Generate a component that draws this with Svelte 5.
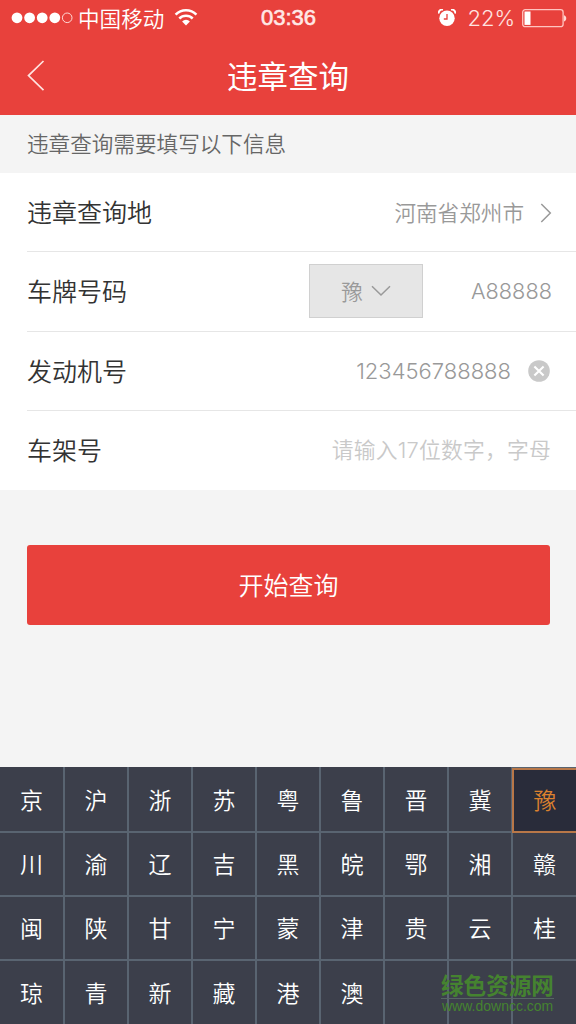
<script lang="ts">
	const provinces = [...'京沪浙苏粤鲁晋冀豫川渝辽吉黑皖鄂湘赣闽陕甘宁蒙津贵云桂琼青新藏港澳'];
	const keys = [...provinces, '', '', ''];

	let province = $state('豫');
	let city = $state('河南省郑州市');
	let plate = $state('A88888');
	let engine = $state('123456788888');
	let frame = $state('');

	function pick(key: string) {
		if (key) province = key;
	}
</script>

<div class="screen">
	<header>
		<div class="status">
			<div class="carrier">
				<svg width="62" height="12" viewBox="0 0 62 12">
					{#each [6, 18.6, 31.2, 43.8] as cx (cx)}
						<circle {cx} cy="5.8" r="5.4" fill="#fff" />
					{/each}
					<circle cx="56.2" cy="5.8" r="4.8" fill="none" stroke="#ffd9d5" />
				</svg>
				<span class="operator">中国移动</span>
				<svg class="wifi" width="24" height="18" viewBox="0 0 24 18">
					<g fill="none" stroke="#fff" stroke-width="2.5">
						<path d="M1.6 6.6a14.5 14.5 0 0 1 20.8 0" />
						<path d="M5.3 10.5a9.4 9.4 0 0 1 13.4 0" />
					</g>
					<path d="M12 17.4l-3.9-3.9a5.4 5.4 0 0 1 7.8 0z" fill="#fff" />
				</svg>
			</div>
			<span class="time">03:36</span>
			<div class="power">
				<svg width="18" height="18" viewBox="0 0 18 18">
					<circle cx="9" cy="9.3" r="7.7" fill="#fff" />
					<path d="M.9 4.5a3 3 0 0 1 4-3.6M17.1 4.5a3 3 0 0 0-4-3.6" fill="none" stroke="#fff" stroke-width="1.9" />
					<path d="M9 5v5H5.8" fill="none" stroke="#e8413c" stroke-width="1.3" />
				</svg>
				<span class="percent">22%</span>
				<svg width="45" height="19" viewBox="0 0 45 19">
					<rect x=".7" y=".7" width="40.4" height="17" rx="2.5" fill="none" stroke="#ffc4bf" stroke-width="1.3" />
					<rect x="2.5" y="2.5" width="6" height="13.4" fill="#fff" />
					<path d="M42 6.2c3 .6 3 5.6 0 6.2z" fill="#ffd9d5" />
				</svg>
			</div>
		</div>
		<div class="nav">
			<button class="back" type="button" aria-label="返回">
				<svg width="18" height="32" viewBox="0 0 18 32">
					<path d="M16.5 1L1.5 15.6l15 14.6" fill="none" stroke="#ffe3e0" stroke-width="1.7" />
				</svg>
			</button>
			<h1>违章查询</h1>
		</div>
	</header>

	<p class="tip">违章查询需要填写以下信息</p>

	<div class="form">
		<div class="row">
			<span class="label">违章查询地</span>
			<span class="value">{city}</span>
			<svg class="next" width="12" height="20" viewBox="0 0 12 20">
				<path d="M1.3 1l9 9-9 9" fill="none" stroke="#999" stroke-width="1.5" />
			</svg>
		</div>
		<div class="row">
			<span class="label">车牌号码</span>
			<button class="province" type="button">
				<span>{province}</span>
				<svg width="20" height="12" viewBox="0 0 20 12">
					<path d="M1 1.2l9 8.8 9-8.8" fill="none" stroke="#999" stroke-width="1.5" />
				</svg>
			</button>
			<span class="value plate">{plate}</span>
		</div>
		<div class="row">
			<span class="label">发动机号</span>
			<span class="value engine">{engine}</span>
			<button class="clear" type="button" aria-label="清除" onclick={() => (engine = '')}>
				<svg width="22" height="22" viewBox="0 0 22 22">
					<circle cx="11" cy="11" r="10.8" fill="#c9c9c9" />
					<path d="M6.4 6.4l9.2 9.2M15.6 6.4l-9.2 9.2" stroke="#fff" stroke-width="2.1" />
				</svg>
			</button>
		</div>
		<div class="row">
			<span class="label">车架号</span>
			<input bind:value={frame} placeholder="请输入17位数字，字母" />
		</div>
	</div>

	<button class="submit" type="button">开始查询</button>

	<div class="keypad">
		{#each keys as key, index (index)}
			<button class="key" class:active={key !== '' && key === province} type="button" onclick={() => pick(key)}>{key}</button>
		{/each}
	</div>

	<div class="watermark">
		<strong>绿色资源网</strong>
		<span>www.downcc.com</span>
	</div>
</div>

<style>
	:global(body) {
		margin: 0;
	}

	.screen {
		position: relative;
		display: flex;
		flex-direction: column;
		width: 576px;
		height: 1024px;
		overflow: hidden;
		background: #f4f4f4;
		font-family: 'Noto Sans CJK SC', sans-serif;
		font-weight: 350;
	}

	button,
	input {
		padding: 0;
		border: 0;
		background: none;
		font: inherit;
	}

	svg {
		display: block;
		flex: none;
	}

	header {
		height: 115px;
		background: #e8413c;
		color: #fff;
	}

	.status {
		display: grid;
		grid-template-columns: 1fr auto 1fr;
		align-items: center;
		height: 36px;
		padding: 0 9px 0 11px;
	}

	.carrier,
	.power {
		display: flex;
		align-items: center;
	}

	.operator {
		margin: 0 0 0 5px;
		font-size: 21.6px;
		line-height: 32px;
	}

	.wifi {
		margin: -3px 0 0 10px;
	}

	.time {
		margin-left: -1px;
		font: 22px/36px 'Liberation Sans', sans-serif;
		color: #ffe9e7;
		-webkit-text-stroke: 0.6px #ffe9e7;
	}

	.power {
		justify-content: flex-end;
	}

	.power svg:first-child {
		margin-top: -1px;
	}

	.percent {
		margin: 0 7px 0 11px;
		font: 300 22px/36px Inter, sans-serif;
		color: #ffe3e0;
	}

	.nav {
		position: relative;
		display: flex;
		align-items: center;
		justify-content: center;
		height: 77px;
	}

	.back {
		position: absolute;
		left: 27px;
		top: 24px;
	}

	h1 {
		margin: 0;
		font-size: 30.5px;
		line-height: 44px;
		font-weight: 400;
	}

	.tip {
		height: 58px;
		margin: 0;
		padding-left: 27px;
		font-size: 21.6px;
		line-height: 55px;
		color: #666;
	}

	.form {
		height: 317px;
		display: grid;
		grid-template-rows: repeat(4, 1fr);
		padding-left: 27px;
		background: #fff;
	}

	.row {
		display: flex;
		align-items: center;
		box-sizing: border-box;
		padding-right: 25px;
		border-bottom: 1px solid #e6e6e6;
	}

	.row:last-child {
		border-bottom: 0;
	}

	.label {
		flex: 1;
		padding-bottom: 2px;
		font-size: 25px;
		line-height: 36px;
		color: #333;
	}

	.value {
		font-size: 21.6px;
		line-height: 32px;
		color: #999;
	}

	.next {
		margin: 2px -1px 0 16px;
	}

	.province {
		display: flex;
		align-items: center;
		justify-content: center;
		gap: 8px;
		box-sizing: border-box;
		width: 114px;
		height: 54px;
		border: 1px solid #d0d0d0;
		background: #e6e6e6;
		font-size: 21.6px;
		color: #999;
	}

	.province span {
		padding-bottom: 2px;
	}

	.plate,
	.engine {
		font-family: Inter, sans-serif;
		font-size: 22px;
		font-weight: 350;
	}

	.plate {
		width: 80px;
		margin-left: 48px;
		font-size: 21.7px;
	}

	.clear {
		margin: 0 1px 0 17px;
	}

	input {
		width: 240px;
		font-family: Inter, 'Noto Sans CJK SC', sans-serif;
		font-size: 21.8px;
		line-height: 32px;
		letter-spacing: 0.2px;
		text-align: right;
		color: #999;
		outline: 0;
	}

	input::placeholder {
		color: #c9c9c9;
		opacity: 1;
	}

	.submit {
		height: 80px;
		margin: 55px 26px 0 27px;
		padding-bottom: 2px;
		border-radius: 3px;
		background: #e8413c;
		color: #fff;
		font-size: 25px;
	}

	.keypad {
		display: grid;
		grid-template-columns: 63px repeat(7, 62px) 63px;
		grid-template-rows: 64px 62px 62px 63px;
		gap: 2px;
		margin-top: auto;
		background: #596471;
	}

	.key {
		padding-bottom: 2px;
		background: #3c3f4b;
		font-size: 23px;
		color: #fff;
	}

	.key:nth-child(-n + 9) {
		padding-bottom: 0;
	}

	.key.active {
		margin: 1px 0 -2px -1px;
		padding-bottom: 3px;
		border: solid #b87748;
		border-width: 2px 0 2px 2px;
		background: #292c3a;
		color: #dc812e;
	}

	.watermark {
		position: absolute;
		left: 441px;
		top: 971px;
		width: 113px;
		color: #458330;
		pointer-events: none;
	}

	.watermark strong,
	.watermark span {
		display: block;
		white-space: nowrap;
	}

	.watermark strong {
		border-bottom: 1px solid #566563;
		font-size: 22.6px;
		line-height: 27px;
		font-weight: 700;
	}

	.watermark span {
		padding-left: 1px;
		font: 14px/14px 'Liberation Sans', sans-serif;
	}
</style>
